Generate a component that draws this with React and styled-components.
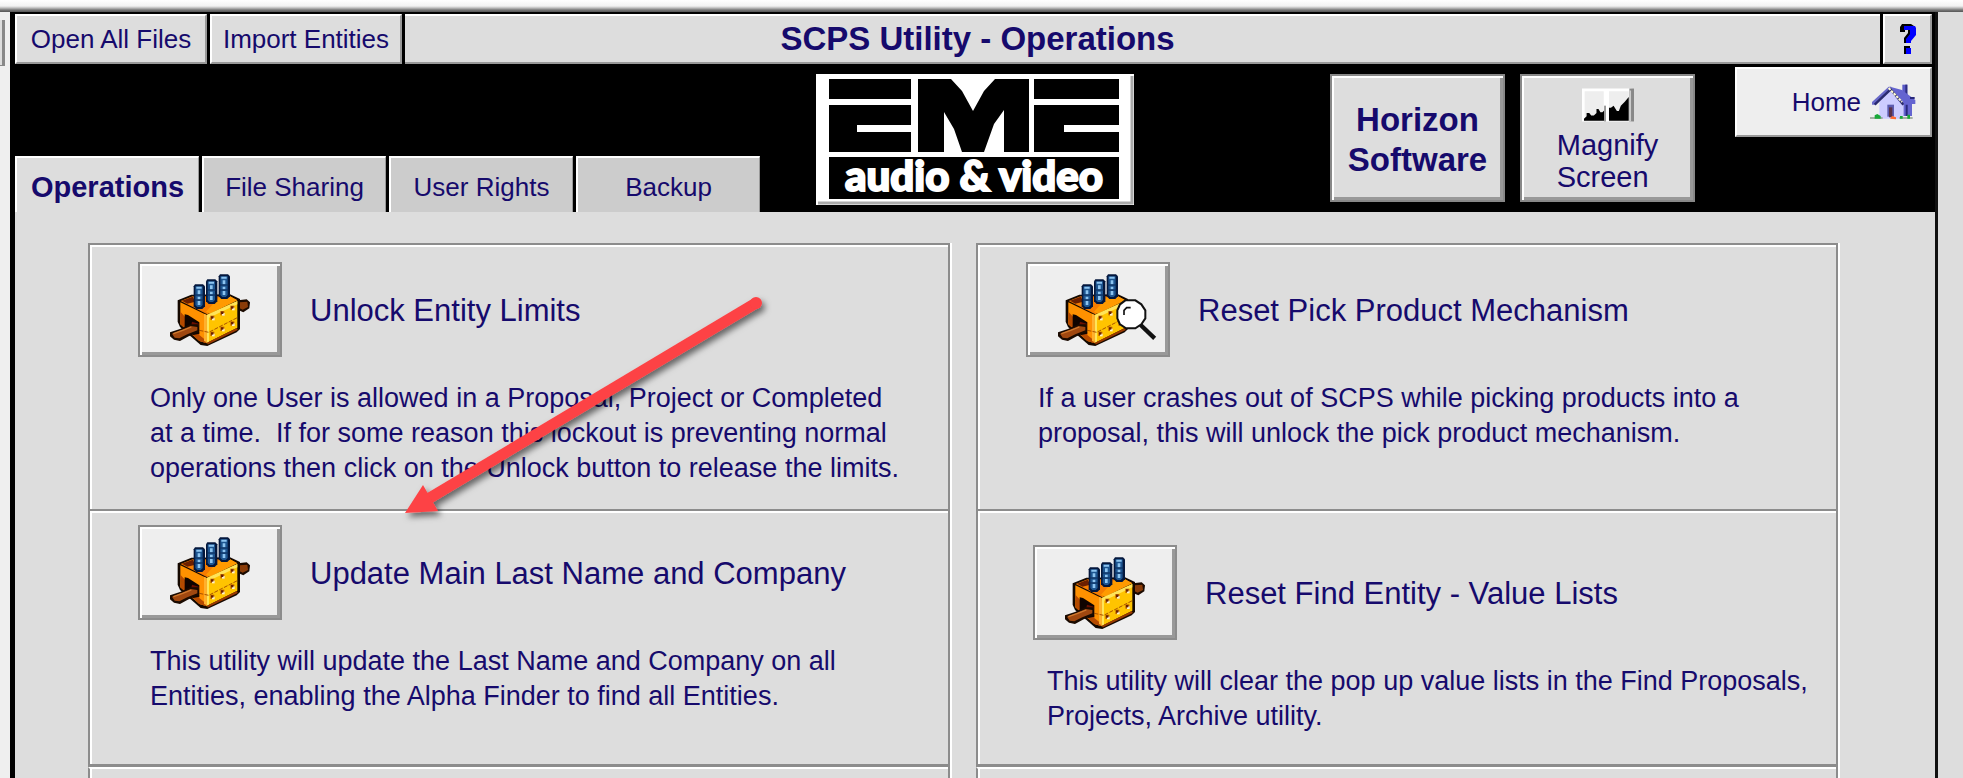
import React, { useState } from 'react';
import styled, { createGlobalStyle } from 'styled-components';

const GlobalStyle = createGlobalStyle`
  * {
    box-sizing: border-box;
  }
  body {
    margin: 0;
    background: #ddd;
    color: #160a6c;
    font-family: "Liberation Sans", Arial, sans-serif;
    font-size: 26px;
    overflow: hidden;
  }
  button {
    font: inherit;
    color: inherit;
    margin: 0;
    padding: 0;
    border: none;
    border-radius: 0;
    cursor: pointer;
  }
  h1, h2, p {
    margin: 0;
  }
`;

const Page = styled.div`
  position: relative;
  min-height: 100vh;
  display: flex;
  flex-direction: column;
  overflow: hidden;
`;

const TopEdge = styled.div`
  height: 12px;
  background: linear-gradient(#fff 0, #f2f2f2 6px, #bbb 8px, #777 10px, #555 12px);
`;

const Desktop = styled.div`
  flex: 1;
  display: flex;
`;

const SideStrip = styled.div`
  width: 10px;
  background: #efefef;
  padding-top: 8px;
`;

const StripHandle = styled.div`
  width: 5px;
  height: 46px;
  background: #ddd;
  border-right: 3px solid #888;
  border-bottom: 1px solid #888;
`;

const Frame = styled.div`
  flex: 1;
  display: flex;
  flex-direction: column;
  margin-right: 25px;
  border-left: 5px solid #000;
  border-right: 3px solid #111;
`;

const Toolbar = styled.header`
  display: flex;
  gap: 3px;
  padding: 2px 3px 0 0;
  background: #000;
`;

const ToolButton = styled.button`
  width: ${props => props.$width};
  height: 50px;
  background: #ddd;
  border-style: solid;
  border-width: 2px;
  border-color: #fff #999 #999 #fff;
  display: flex;
  align-items: center;
  justify-content: center;
`;

const TitleBar = styled.h1`
  flex: 1;
  padding-right: 330px;
  background: #ddd;
  border-top: 2px solid #fff;
  border-bottom: 2px solid #999;
  font-size: 33px;
  line-height: 46px;
  font-weight: bold;
  text-align: center;
`;

const Banner = styled.div`
  display: grid;
  grid-template-columns: 1fr auto 1fr;
  height: 148px;
  background: #000;
`;

const Tabs = styled.nav`
  display: flex;
  align-items: flex-end;
  gap: 3px;
`;

const Tab = styled.button`
  width: 184px;
  height: 56px;
  padding-top: 4px;
  background: ${props => props.$active ? '#ddd' : '#ccc'};
  border-top: 2px solid #fff;
  border-left: 2px solid #fff;
  border-right: 1px solid #999;
  font-size: ${props => props.$active ? '29px' : '26px'};
  font-weight: ${props => props.$active ? 'bold' : 'normal'};
`;

const LogoBox = styled.div`
  padding-top: 10px;
`;

const BannerActions = styled.div`
  display: flex;
  justify-content: flex-end;
  align-items: flex-start;
  gap: 15px;
  padding-right: 3px;
`;

const BigButton = styled.button`
  width: 175px;
  height: 128px;
  margin-top: 10px;
  padding-top: 4px;
  background: #ddd;
  border: 2px solid #888;
  box-shadow: inset 2px 2px 0 #fff, inset -3px -3px 0 #999;
  display: flex;
  flex-direction: column;
  align-items: center;
  justify-content: center;
  gap: 7px;
  font-size: ${props => props.$bold ? '33px' : '29px'};
  line-height: ${props => props.$bold ? '40px' : '32px'};
  font-weight: ${props => props.$bold ? 'bold' : 'normal'};
  text-align: ${props => props.$bold ? 'center' : 'left'};
`;

const HomeButton = styled.button`
  width: 197px;
  height: 70px;
  margin: 3px 0 0 25px;
  padding-right: 14px;
  background: #eee;
  border-style: solid;
  border-width: 2px;
  border-color: #fff #999 #999 #fff;
  display: flex;
  align-items: center;
  justify-content: flex-end;
  gap: 9px;
`;

const Main = styled.main`
  flex: 1;
  display: grid;
  grid-template-columns: 1fr 1fr;
  gap: 26px;
  padding: 31px 97px 0 73px;
`;

const Column = styled.div`
  display: flex;
  flex-direction: column;
  border-right: 2px solid #8c8c8c;
  box-shadow: 2px 0 0 #fff;
`;

const Panel = styled.section`
  height: ${props => props.$height};
  padding: ${props => props.$pad};
  border-top: 2px solid #8c8c8c;
  border-left: 2px solid #8c8c8c;
  box-shadow: inset 2px 2px 0 #fff;
`;

const NextPanel = styled(Panel)`
  flex: 1;
  margin-top: 3px;
  border-top-color: #fff;
  box-shadow: inset 2px 0 0 #fff, 0 -3px 0 #8c8c8c;
`;

const PanelHead = styled.div`
  display: flex;
  align-items: center;
  gap: 28px;
`;

const ToolIcon = styled.button`
  width: 144px;
  height: 95px;
  background: #eee;
  border: 2px solid #8c8c8c;
  box-shadow: inset 2px 2px 0 #fff, inset -3px -3px 0 #999;
  display: flex;
  align-items: center;
  justify-content: center;
`;

const PanelTitle = styled.h2`
  padding-top: 3px;
  font-size: 31px;
  line-height: 40px;
  font-weight: normal;
`;

const PanelText = styled.p`
  padding: 24px 0 0 ${props => props.$indent};
  font-size: 27px;
  line-height: 35px;
  white-space: pre-line;
`;

const ToasterSvg = styled.svg`
  overflow: visible;
`;

const ArrowLayer = styled.svg`
  position: absolute;
  left: 400px;
  top: 290px;
  pointer-events: none;
`;

const ToasterIcon = ({ magnifier }) => (
  <ToasterSvg width="80" height="72" viewBox="120 57 240 216" aria-hidden="true">
    {/* crust sticking out on the far side */}
    {!magnifier && (
      <g>
        <path d="M324 136L350 133L360 142L358 160L340 172L326 166Z" fill="#1a0a00" />
        <path d="M329 142L352 140L354 156L338 164L329 160Z" fill="#8a3c08" />
      </g>
    )}
    {/* box */}
    <path d="M143 136L184 119L300 118L330 132V222L320 232L232 273L212 270L150 216L143 200Z" fill="#140800" />
    <path d="M152 138L188 124H300L322 136L232 178Z" fill="#f57c00" />
    <path d="M156 137L188 125L196 140L172 146Z" fill="#6b1f00" />
    <path d="M270 124H300L322 136L240 176L228 170Z" fill="#ff9a00" />
    <path d="M151 142L230 180V265L208 258L151 208Z" fill="#ff9100" />
    <path d="M151 170V208L208 258L230 265V254Z" fill="#b64a00" />
    <path d="M208 196L230 190V258L208 240Z" fill="#ff9100" />
    <path d="M230 180L322 138V218L230 264Z" fill="#ffc400" />
    <path d="M230 180L322 138V148L237 188V260L230 264Z" fill="#ffe45a" />
    <path d="M222 176L230 180V262L222 258Z" fill="#ffb02e" />
    <path d="M151 188L164 196M208 226L236 232L322 188" stroke="#a85200" strokeWidth="3" strokeDasharray="12 4" fill="none" />
    <path d="M232 266L322 222" stroke="#9a3a00" strokeWidth="6" />
    {/* opening and the slice in it */}
    <path d="M164 178L174 180L208 202V236L190 240L164 214Z" fill="#100400" />
    <path d="M186 200L206 206V216L184 210Z" fill="#6b1000" />
    <path d="M120 232L150 222L180 208H206V232L176 244L150 258L132 254L120 244Z" fill="#1a0a00" />
    <path d="M126 236L156 224L182 213L202 216V226L172 238L148 250L134 248Z" fill="#a04810" />
    <path d="M130 236L158 226L184 216" stroke="#d07a30" strokeWidth="4" fill="none" />
    {[[247, 189], [277, 175], [307, 159], [247, 237], [277, 222], [307, 206]].map(([x, y]) => (
      <g key={`${x}-${y}`}>
        <rect x={x - 6} y={y - 7} width="12" height="13" fill="#c06800" />
        <rect x={x - 1} y={y - 1} width="8" height="8" fill="#fff3c8" />
        <rect x={x - 4} y={y - 5} width="7" height="7" fill="#6a2000" />
      </g>
    ))}
    {/* pegs */}
    {[[189, 88], [226, 73], [264, 58]].map(([x, y]) => (
      <g key={x}>
        <path d={`M${x + 6} ${y}h24l6 6v60l-8 8h-18l-8 -8v-60z`} fill="#04173c" />
        <path d={`M${x + 7} ${y + 6}h22v56l-6 6h-10l-6 -6z`} fill="#1d5590" />
        <path d={`M${x + 10} ${y + 7}h16v6h-16zM${x + 14} ${y + 18}h8v12h-8zM${x + 14} ${y + 37}h8v8h-8zM${x + 14} ${y + 50}h8v12h-8z`} fill="#8cc4f0" />
        <path d={`M${x + 4} ${y + 32}h28M${x + 4} ${y + 47}h28`} stroke="#0a2a58" strokeWidth="3" />
      </g>
    ))}
    {magnifier && (
      <g>
        <path d="M368 210L410 250" stroke="#111" strokeWidth="13" />
        <path d="M322 136h30l18 12l12 18v24l-12 18l-18 12h-28l-18 -12l-8 -18v-24l8 -18z" fill="#fff" stroke="#111" strokeWidth="6" />
        <path d="M318 180V166L326 158H338" stroke="#111" strokeWidth="5" fill="none" />
      </g>
    )}
  </ToasterSvg>
);

const HelpIcon = () => (
  <svg width="18" height="32" viewBox="0 0 18 32" aria-hidden="true">
    <path d="M3 1H12L15 3V10L10 17V20H5V15L9 10V7H6V9H1V4Z" fill="#000" />
    <path d="M5 3H16L17 5V12L12 18V20H7V16L11 11V7H5Z" fill="#00f" />
    <path d="M5 23H11V31H5Z" fill="#000" />
    <path d="M7 25H12V31H7Z" fill="#00f" />
  </svg>
);

const MagnifyIcon = () => (
  <svg width="52" height="34" viewBox="60 49 158 102" aria-hidden="true">
    <path d="M60 50H210V150H60Z" fill="#fff" />
    <path d="M68 58H126V148H68ZM142 58H202V148H142Z" fill="#eee" />
    <path d="M66 148V142L74 134V124H82L88 132H96L104 124V112H110L116 122H122L128 116V148Z" fill="#000" />
    <path d="M130 102V150" stroke="#999" strokeWidth="6" />
    <path d="M142 148V108H148L156 102L166 118H172L178 102L190 90L202 76V148Z" fill="#000" />
    <path d="M204 50H218V150H204Z" fill="#888" />
    <path d="M204 56H209V150H204Z" fill="#ccc" />
  </svg>
);

const HouseIcon = () => (
  <svg width="46" height="36" viewBox="150 222 138 108" aria-hidden="true">
    <path d="M247 224H262V262H247Z" fill="#5a5ac8" />
    <path d="M256 224H262V270H256Z" fill="#2c2c80" />
    <path d="M210 230L246 240L286 270V282H276V318H250V280Z" fill="#6464d0" />
    <path d="M178 276L210 240L250 282V326H178Z" fill="#ccccff" />
    <path d="M156 276L206 230H214L168 284H156Z" fill="#6868c8" />
    <path d="M164 284L212 238L250 284" stroke="#2a2a70" strokeWidth="7" fill="none" />
    <path d="M206 234L246 276" stroke="#fffbd0" strokeWidth="6" strokeDasharray="8 3" />
    <path d="M260 284V318M270 264H284" stroke="#28287c" strokeWidth="6" />
    <path d="M202 284H222V320H202Z" fill="#5c5cb0" />
    <path d="M207 292H217V322H207Z" fill="#5a3048" />
    <path d="M150 324H188M238 324H278" stroke="#8a9a8a" strokeWidth="5" />
    <path d="M164 326V316L172 312L182 318V326ZM262 326V314H270V326ZM240 326V318H248V326Z" fill="#18a838" />
    <path d="M210 326L216 318L228 322V328Z" fill="#ff6a30" />
  </svg>
);

const Logo = () => (
  <svg width="318" height="131" viewBox="0 0 318 131" role="img" aria-label="EME audio &amp; video">
    <path d="M0 0H318V131H0Z" fill="#fff" />
    <path d="M2 129H316V2" fill="none" stroke="#aaa" strokeWidth="3" />
    <g fill="#000">
      <path d="M13 5H95V25H13ZM13 31H95V51H41V58H95V78H13Z" />
      <path d="M102 5H135L146 17L157 37L168 17L179 5H213V78H188V36L178 50L168 78H146L138 55L128 38V78H102Z" />
      <path d="M218 5H303V25H218ZM218 31H303V51H248V58H303V78H218Z" />
      <path d="M13 83H303V125H13Z" />
    </g>
    <text x="158" y="117" textAnchor="middle" fill="#fff" stroke="#fff" strokeWidth="2" fontFamily="Lato, sans-serif" fontSize="42" fontWeight="900">audio &amp; video</text>
  </svg>
);

const Arrow = () => (
  <ArrowLayer width="400" height="250" viewBox="0 0 400 250" aria-hidden="true">
    <defs>
      <filter id="arrowShadow" x="-10%" y="-10%" width="120%" height="120%">
        <feDropShadow dx="3" dy="4" stdDeviation="3" floodColor="#000" floodOpacity="0.55" />
      </filter>
    </defs>
    <g filter="url(#arrowShadow)">
      <path d="M356 13L28 209" stroke="#fd4244" strokeWidth="11" />
      <circle cx="356" cy="13" r="6" fill="#fd4244" />
      <path d="M5 223L23 195L38 221Z" fill="#fd4244" />
    </g>
  </ArrowLayer>
);

const tabs = ['Operations', 'File Sharing', 'User Rights', 'Backup'];

const Tool = ({ title, text, height, pad, indent, magnifier }) => (
  <Panel $height={height} $pad={pad}>
    <PanelHead>
      <ToolIcon aria-label={title}>
        <ToasterIcon magnifier={magnifier} />
      </ToolIcon>
      <PanelTitle>{title}</PanelTitle>
    </PanelHead>
    <PanelText $indent={indent}>{text}</PanelText>
  </Panel>
);

const App = () => {
  const [activeTab, setActiveTab] = useState('Operations');

  return (
    <Page>
      <GlobalStyle />
      <TopEdge />
      <Desktop>
        <SideStrip>
          <StripHandle />
        </SideStrip>
        <Frame>
          <Toolbar>
            <ToolButton $width="192px">Open All Files</ToolButton>
            <ToolButton $width="192px">Import Entities</ToolButton>
            <TitleBar>SCPS Utility - Operations</TitleBar>
            <ToolButton $width="49px" aria-label="Help">
              <HelpIcon />
            </ToolButton>
          </Toolbar>
          <Banner>
            <Tabs>
              {tabs.map(tab => (
                <Tab key={tab} $active={tab === activeTab} onClick={() => setActiveTab(tab)}>{tab}</Tab>
              ))}
            </Tabs>
            <LogoBox>
              <Logo />
            </LogoBox>
            <BannerActions>
              <BigButton $bold>
                <span>Horizon<br />Software</span>
              </BigButton>
              <BigButton>
                <MagnifyIcon />
                <span>Magnify<br />Screen</span>
              </BigButton>
              <HomeButton>
                Home
                <HouseIcon />
              </HomeButton>
            </BannerActions>
          </Banner>
          <Main>
            <Column>
              <Tool
                title="Unlock Entity Limits"
                height="266px"
                pad="17px 0 0 48px"
                indent="12px"
                text={'Only one User is allowed in a Proposal, Project or Completed\nat a time. \u00a0If for some reason this lockout is preventing normal\noperations then click on the Unlock button to release the limits.'}
              />
              <Tool
                title="Update Main Last Name and Company"
                height="255px"
                pad="14px 0 0 48px"
                indent="12px"
                text={'This utility will update the Last Name and Company on all\nEntities, enabling the Alpha Finder to find all Entities.'}
              />
              <NextPanel />
            </Column>
            <Column>
              <Tool
                title="Reset Pick Product Mechanism"
                height="266px"
                pad="17px 0 0 48px"
                indent="12px"
                magnifier
                text={'If a user crashes out of SCPS while picking products into a\nproposal, this will unlock the pick product mechanism.'}
              />
              <Tool
                title="Reset Find Entity - Value Lists"
                height="255px"
                pad="34px 0 0 55px"
                indent="14px"
                text={'This utility will clear the pop up value lists in the Find Proposals,\nProjects, Archive utility.'}
              />
              <NextPanel />
            </Column>
          </Main>
        </Frame>
      </Desktop>
      <Arrow />
    </Page>
  );
};

export default App;
